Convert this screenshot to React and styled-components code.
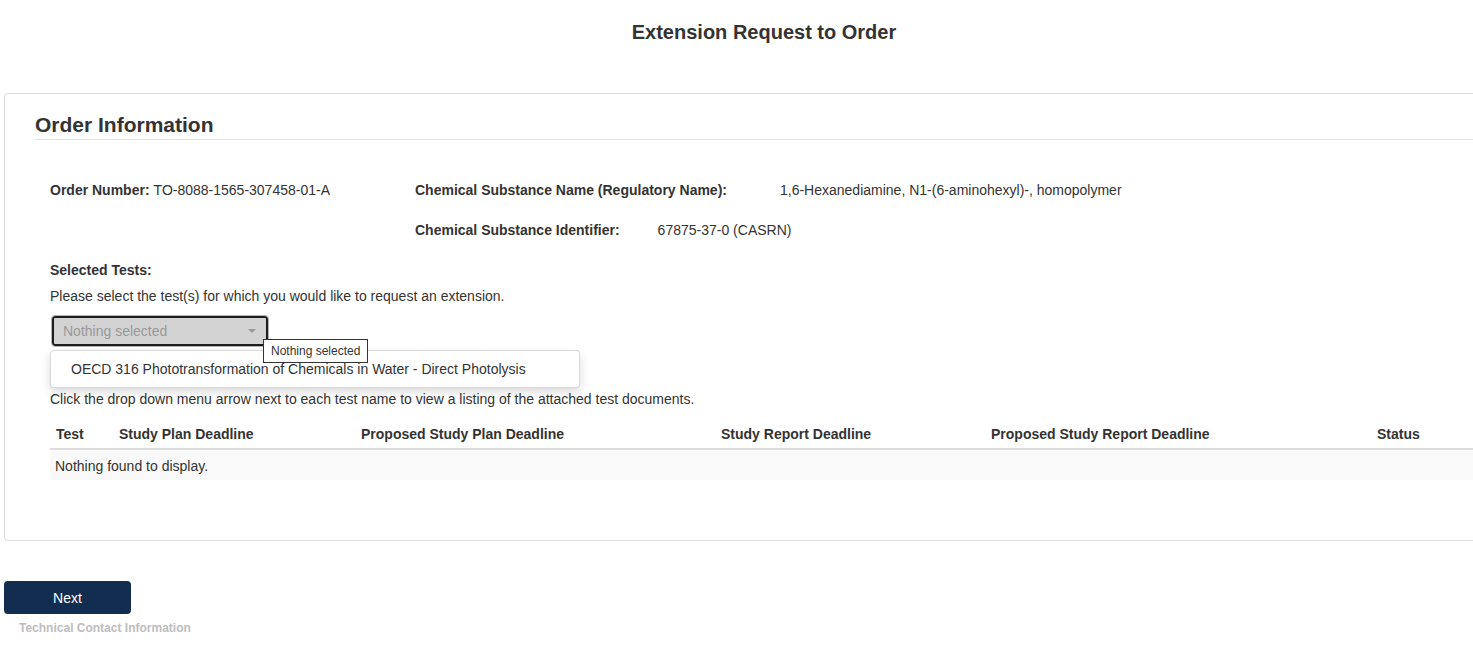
import React from "react";
import styled, { createGlobalStyle } from "styled-components";

const GlobalStyle = createGlobalStyle`
  html, body {
    margin: 0;
    padding: 0;
    background: #fff;
    overflow-x: hidden;
  }
  body {
    font-family: "Liberation Sans", Arial, sans-serif;
    font-size: 14px;
    color: #333;
  }
`;

const Page = styled.div`
  padding: 0 4px 20px;
  width: 1540px;
`;

const PageTitle = styled.h1`
  font-size: 20px;
  font-weight: bold;
  text-align: center;
  width: 1520px;
  margin: 0;
  padding: 20px 0 0;
  line-height: 24px;
  height: 93px;
  box-sizing: border-box;
`;

const Panel = styled.section`
  border: 1px solid #ddd;
  border-radius: 4px;
  padding: 17px 0 60px 30px;
`;

const PanelHeading = styled.h2`
  font-size: 21px;
  font-weight: bold;
  margin: 0;
  line-height: 28px;
  border-bottom: 1px solid #e3e3e3;
`;

const PanelBody = styled.div`
  padding: 42px 0 0 15px;
`;

const InfoGrid = styled.div`
  display: grid;
  grid-template-columns: 365px 1fr;
  row-gap: 24px;
  font-size: 14px;
  line-height: 16px;
`;

const Label = styled.b`
  font-weight: bold;
`;

const Value = styled.span`
  margin-left: ${(p) => p.$gap || 4}px;
`;

const SectionLabel = styled.div`
  margin-top: 24px;
  font-size: 14px;
  font-weight: bold;
  line-height: 16px;
`;

const Hint = styled.p`
  margin: ${(p) => p.$top || 0}px 0 0;
  font-size: 14px;
  line-height: 18px;
`;

const SelectWrap = styled.div`
  position: relative;
  margin-top: 10px;
  width: 218px;
  height: 32px;
  margin-left: 1px;
`;

const SelectButton = styled.div`
  box-sizing: border-box;
  height: 100%;
  display: flex;
  align-items: center;
  justify-content: space-between;
  padding: 0 10px 0 11px;
  background: #d3d3d3;
  border: 1px solid #b5b5b5;
  border-radius: 4px;
  box-shadow: inset 0 0 0 2px #1d1d1d;
  color: #999;
  font-size: 14px;
`;

const Caret = styled.span`
  width: 0;
  height: 0;
  border-left: 4px solid transparent;
  border-right: 4px solid transparent;
  border-top: 4px solid #999;
  margin-right: 2px;
`;

const Menu = styled.ul`
  position: absolute;
  left: -1px;
  top: 35px;
  z-index: 2;
  width: 530px;
  box-sizing: border-box;
  margin: 0;
  padding: 9px 0;
  list-style: none;
  background: #fff;
  border: 1px solid rgba(0, 0, 0, 0.15);
  border-radius: 4px;
  box-shadow: 0 4px 10px rgba(0, 0, 0, 0.15);
`;

const MenuItem = styled.li`
  padding: 0 20px;
  line-height: 18px;
  font-size: 14px;
  color: #333;
`;

const Tooltip = styled.div`
  position: absolute;
  left: 212px;
  top: 24px;
  z-index: 3;
  background: #fff;
  border: 1px solid #333;
  font-size: 12px;
  line-height: 14px;
  padding: 4px 7px;
  white-space: nowrap;
  color: #333;
`;

const Table = styled.table`
  margin-top: 10px;
  border-collapse: collapse;
  table-layout: fixed;
  width: 1460px;
  font-size: 14px;
`;

const Th = styled.th`
  width: ${(p) => p.$w - 12}px;
  text-align: left;
  font-weight: bold;
  padding: 8px 6px 6px;
  line-height: 16px;
  border-bottom: 2px solid #ddd;
`;

const Td = styled.td`
  background: #f9f9f9;
  padding: 8px 5px 6px;
  line-height: 16px;
`;

const NextButton = styled.button`
  display: block;
  margin-top: 40px;
  width: 127px;
  height: 33px;
  border: none;
  border-radius: 4px;
  background: #132d50;
  color: #fff;
  font-family: "Liberation Sans", Arial, sans-serif;
  font-size: 14px;
`;

const StepLink = styled.div`
  margin: 6px 0 0 15px;
  font-size: 12px;
  font-weight: bold;
  line-height: 16px;
  color: #bdbdbd;
`;

const columns = [
  ["Test", 63],
  ["Study Plan Deadline", 242],
  ["Proposed Study Plan Deadline", 360],
  ["Study Report Deadline", 270],
  ["Proposed Study Report Deadline", 386],
  ["Status", 139],
];

const App = () => {
  return (
    <Page>
      <GlobalStyle />
      <PageTitle>Extension Request to Order</PageTitle>
      <Panel>
        <PanelHeading>Order Information</PanelHeading>
        <PanelBody>
          <InfoGrid>
            <div>
              <Label>Order Number:</Label>
              <Value>TO-8088-1565-307458-01-A</Value>
            </div>
            <div>
              <Label>Chemical Substance Name (Regulatory Name):</Label>
              <Value $gap={53}>
                1,6-Hexanediamine, N1-(6-aminohexyl)-, homopolymer
              </Value>
            </div>
            <div />
            <div>
              <Label>Chemical Substance Identifier:</Label>
              <Value $gap={38}>67875-37-0 (CASRN)</Value>
            </div>
          </InfoGrid>

          <SectionLabel>Selected Tests:</SectionLabel>
          <Hint $top={9}>
            Please select the test(s) for which you would like to request an
            extension.
          </Hint>
          <SelectWrap>
            <SelectButton>
              Nothing selected
              <Caret />
            </SelectButton>
            <Tooltip>Nothing selected</Tooltip>
            <Menu>
              <MenuItem>
                OECD 316 Phototransformation of Chemicals in Water - Direct
                Photolysis
              </MenuItem>
            </Menu>
          </SelectWrap>

          <Hint $top={43}>
            Click the drop down menu arrow next to each test name to view a
            listing of the attached test documents.
          </Hint>
          <Table>
            <thead>
              <tr>
                {columns.map(([name, w]) => (
                  <Th key={name} $w={w}>
                    {name}
                  </Th>
                ))}
              </tr>
            </thead>
            <tbody>
              <tr>
                <Td colSpan={columns.length}>Nothing found to display.</Td>
              </tr>
            </tbody>
          </Table>
        </PanelBody>
      </Panel>
      <NextButton>Next</NextButton>
      <StepLink>Technical Contact Information</StepLink>
    </Page>
  );
};

export default App;
